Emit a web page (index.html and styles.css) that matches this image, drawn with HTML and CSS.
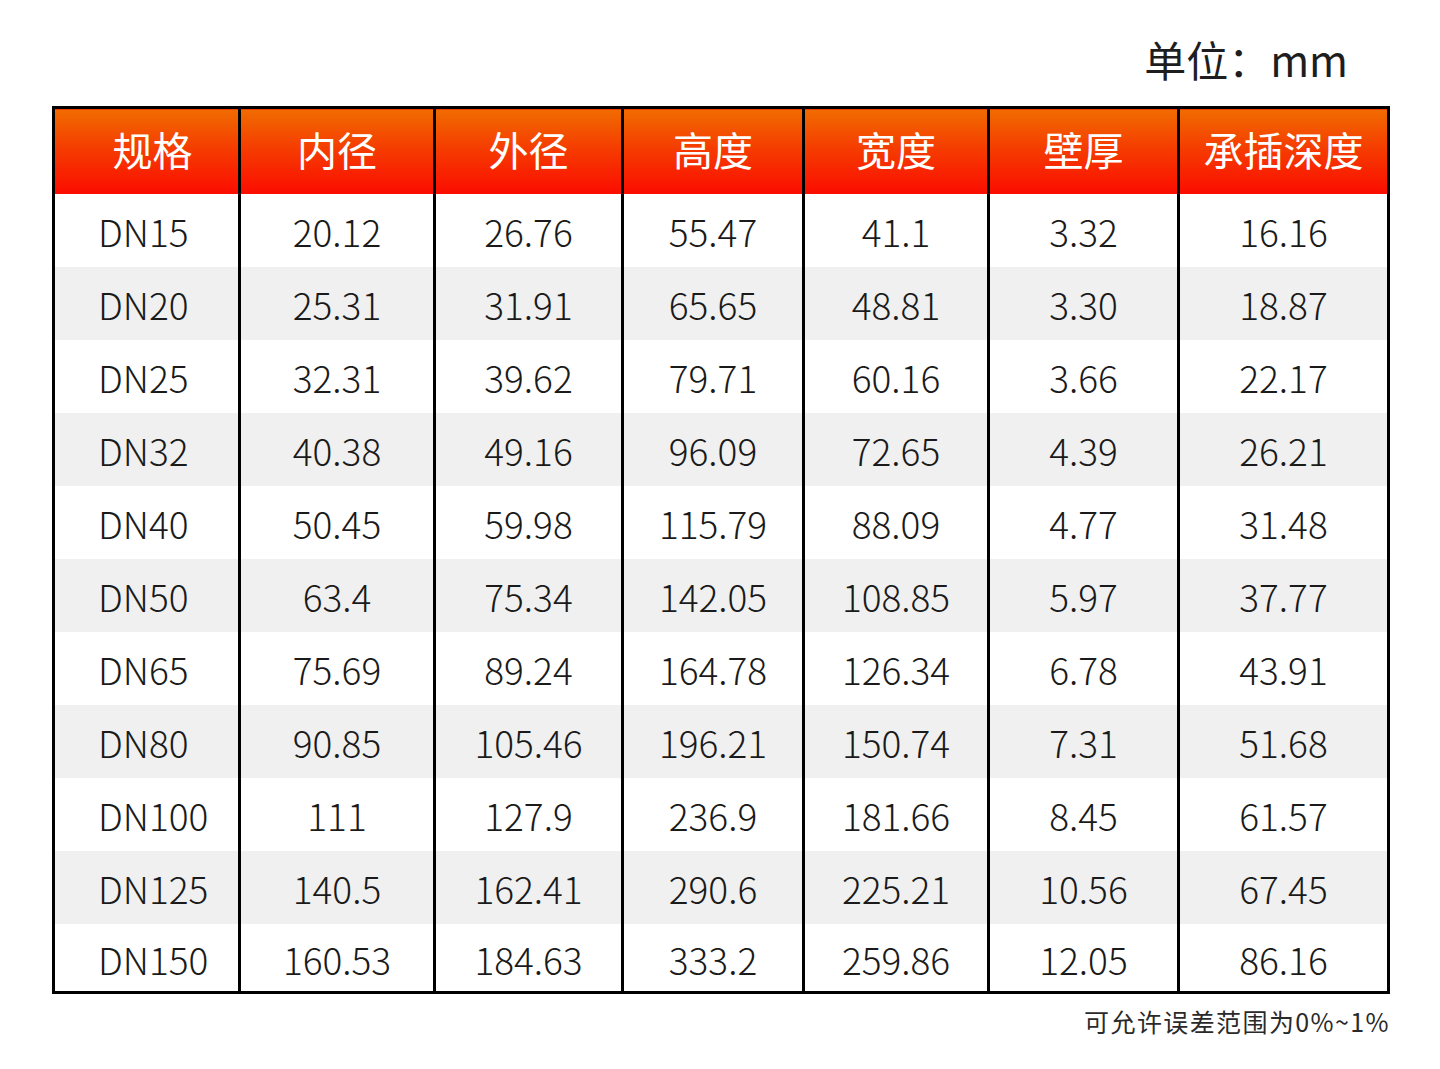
FILE: index.html
```html
<!DOCTYPE html>
<html lang="zh-CN">
<head>
<meta charset="utf-8">
<title>规格尺寸表</title>
<link rel="stylesheet" href="styles.css">
</head>
<body>
<div class="page">
  <div class="unit">单位：mm</div>
  <table class="spec">
    <colgroup>
      <col class="c1"><col class="c2"><col class="c3"><col class="c4"><col class="c5"><col class="c6"><col class="c7">
    </colgroup>
    <thead>
      <tr><th class="first">规格</th><th>内径</th><th>外径</th><th>高度</th><th>宽度</th><th>壁厚</th><th>承插深度</th></tr>
    </thead>
    <tbody>
      <tr><td>DN15</td><td>20.12</td><td>26.76</td><td>55.47</td><td>41.1</td><td>3.32</td><td>16.16</td></tr>
      <tr><td>DN20</td><td>25.31</td><td>31.91</td><td>65.65</td><td>48.81</td><td>3.30</td><td>18.87</td></tr>
      <tr><td>DN25</td><td>32.31</td><td>39.62</td><td>79.71</td><td>60.16</td><td>3.66</td><td>22.17</td></tr>
      <tr><td>DN32</td><td>40.38</td><td>49.16</td><td>96.09</td><td>72.65</td><td>4.39</td><td>26.21</td></tr>
      <tr><td>DN40</td><td>50.45</td><td>59.98</td><td>115.79</td><td>88.09</td><td>4.77</td><td>31.48</td></tr>
      <tr><td>DN50</td><td>63.4</td><td>75.34</td><td>142.05</td><td>108.85</td><td>5.97</td><td>37.77</td></tr>
      <tr><td>DN65</td><td>75.69</td><td>89.24</td><td>164.78</td><td>126.34</td><td>6.78</td><td>43.91</td></tr>
      <tr><td>DN80</td><td>90.85</td><td>105.46</td><td>196.21</td><td>150.74</td><td>7.31</td><td>51.68</td></tr>
      <tr><td>DN100</td><td>111</td><td>127.9</td><td>236.9</td><td>181.66</td><td>8.45</td><td>61.57</td></tr>
      <tr><td>DN125</td><td>140.5</td><td>162.41</td><td>290.6</td><td>225.21</td><td>10.56</td><td>67.45</td></tr>
      <tr class="last"><td>DN150</td><td>160.53</td><td>184.63</td><td>333.2</td><td>259.86</td><td>12.05</td><td>86.16</td></tr>
    </tbody>
  </table>
  <div class="note">可允许误差范围为0%~1%</div>
</div>
</body>
</html>
```
FILE: styles.css
```css
html, body {
  margin: 0;
  padding: 0;
  background: #ffffff;
}
body {
  font-family: "Noto Sans CJK SC", "Noto Sans", sans-serif;
  color: #1a1a1a;
}
.page {
  width: 1336px;
  margin-left: 52px;
  padding-top: 31px;
}
.unit {
  text-align: right;
  padding-right: 40px;
  font-size: 42px;
  line-height: 56px;
  height: 75px;
  color: #1e1e1e;
}
.spec {
  width: 1335px;
  border-collapse: collapse;
  table-layout: fixed;
  border: 3px solid #000;
}
.c1 { width: 186px; }
.c2 { width: 195px; }
.c3 { width: 188px; }
.c4 { width: 181px; }
.c5 { width: 185px; }
.c6 { width: 190px; }
.c7 { width: 210px; }
.spec th,
.spec td {
  border-left: 3px solid #000;
  border-right: 3px solid #000;
  text-align: center;
  padding: 0;
}
.spec th {
  height: 79px;
  font-size: 40px;
  font-weight: 400;
  color: #ffffff;
  background: linear-gradient(to bottom, #f06c00 0%, #f53d00 45%, #fb0c00 100%);
  padding-bottom: 6px;
}
.spec th.first {
  padding-left: 12px;
}
.spec td {
  height: 73px;
  font-size: 37px;
  font-weight: 300;
  color: #1a1a1a;
  background: #ffffff;
}
.spec td:first-child {
  text-align: left;
  padding-left: 43px;
}
.spec tbody tr:nth-child(even) td {
  background: #f0f0f0;
}
.spec tr.last td {
  height: 64px;
  padding-top: 3px;
}
.note {
  text-align: right;
  font-size: 25px;
  font-weight: 400;
  letter-spacing: 1.4px;
  line-height: 30px;
  margin-top: 12px;
  margin-right: -2px;
  color: #2a2a2a;
}
```
